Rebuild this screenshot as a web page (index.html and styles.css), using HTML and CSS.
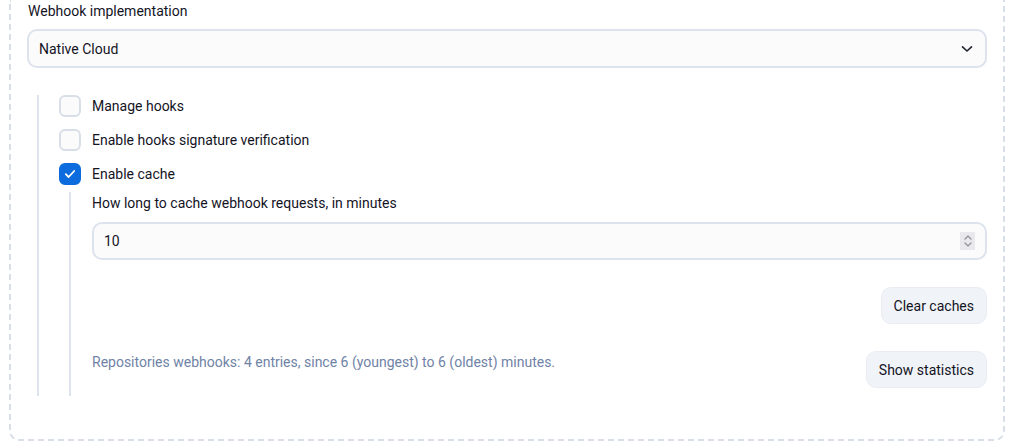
FILE: index.html
```html
<!DOCTYPE html>
<html>
<head>
<meta charset="utf-8">
<link rel="stylesheet" href="styles.css">
</head>
<body>
<div class="panel">
  <div class="field-label">Webhook implementation</div>
  <div class="select">
    <span class="select-value">Native Cloud</span>
    <svg class="chevron" width="12" height="8" viewBox="0 0 12 8"><path d="M1.5 1.8 L6 6 L10.5 1.8" fill="none" stroke="#1f2430" stroke-width="1.6" stroke-linecap="round" stroke-linejoin="round"/></svg>
  </div>
  <div class="nested">
    <div class="check-row">
      <span class="checkbox"></span>
      <span class="check-label">Manage hooks</span>
    </div>
    <div class="check-row">
      <span class="checkbox"></span>
      <span class="check-label">Enable hooks signature verification</span>
    </div>
    <div class="check-row">
      <span class="checkbox checked">
        <svg width="12" height="10" viewBox="0 0 12 10"><path d="M1.8 5.2 L4.6 8 L10.2 2" fill="none" stroke="#fff" stroke-width="1.8" stroke-linecap="round" stroke-linejoin="round"/></svg>
      </span>
      <span class="check-label">Enable cache</span>
    </div>
    <div class="nested inner">
      <div class="field-label">How long to cache webhook requests, in minutes</div>
      <div class="input">
        <span class="input-value">10</span>
        <span class="spinner">
          <svg width="10" height="16" viewBox="0 0 10 16"><path d="M2 6 L5 3 L8 6" fill="none" stroke="#8a8f98" stroke-width="1.2" stroke-linecap="round"/><path d="M2 10 L5 13 L8 10" fill="none" stroke="#8a8f98" stroke-width="1.2" stroke-linecap="round"/></svg>
        </span>
      </div>
      <div class="actions">
        <button class="btn">Clear caches</button>
      </div>
      <div class="stats-row">
        <span class="stats-text">Repositories webhooks: 4 entries, since 6 (youngest) to 6 (oldest) minutes.</span>
        <button class="btn">Show statistics</button>
      </div>
    </div>
  </div>
</div>
</body>
</html>
```

FILE: styles.css
```css
* { box-sizing: border-box; }
html, body { margin: 0; padding: 0; background: #fff; }
body {
  font-family: Roboto, "Noto Sans", sans-serif;
  font-size: 14px;
  color: #14141f;
}
.panel {
  margin-left: 9px;
  width: 996px;
  border: 2px dashed #d9dfe8;
  border-top: none;
  border-radius: 0 0 10px 10px;
  padding: 1px 16px 43px 16px;
}
.field-label {
  line-height: 20px;
  height: 20px;
  padding-left: 1px;
}
.select {
  margin-top: 8px;
  height: 39px;
  border: 2px solid #dce3ec;
  border-radius: 10px;
  background: #fbfbfc;
  display: flex;
  align-items: center;
  justify-content: space-between;
  padding: 0 12px 0 10px;
}
.chevron { display: block; }
.nested {
  margin-top: 27px;
  margin-left: 10px;
  border-left: 2px solid #dce3ec;
  padding-left: 20px;
  display: flex;
  flex-direction: column;
}
.check-row {
  display: flex;
  align-items: center;
  height: 22px;
  margin-bottom: 12px;
}
.checkbox {
  width: 22px;
  height: 22px;
  border: 2px solid #d8dfe9;
  border-radius: 6px;
  background: #fbfbfc;
  display: flex;
  align-items: center;
  justify-content: center;
  flex: none;
}
.checkbox.checked {
  background: #0c6cde;
  border-color: #0c6cde;
}
.checkbox svg { display: block; }
.check-label {
  margin-left: 11px;
  line-height: 20px;
}
.nested.inner {
  margin-top: -5px;
  margin-left: 10px;
  padding-left: 21px;
  padding-top: 1px;
  padding-bottom: 8px;
}
.inner .field-label { padding-left: 0; }
.input {
  margin-top: 9px;
  height: 38px;
  border: 2px solid #dce3ec;
  border-radius: 10px;
  background: #fbfbfc;
  display: flex;
  align-items: center;
  justify-content: space-between;
  padding: 0 12px 0 10px;
}
.spinner {
  width: 15px;
  height: 18px;
  background: #e9e9ed;
  display: flex;
  align-items: center;
  justify-content: center;
  margin-right: -2px;
}
.spinner svg { display: block; }
.actions {
  display: flex;
  justify-content: flex-end;
  margin-top: 27px;
}
.btn {
  font-family: inherit;
  font-size: 14px;
  color: #14141f;
  background: #f0f3f7;
  border: 1px solid #e9edf2;
  border-radius: 10px;
  height: 37px;
  padding: 0 12px;
  cursor: pointer;
}
.stats-row {
  display: flex;
  justify-content: space-between;
  align-items: center;
  margin-top: 27px;
}
.stats-text {
  color: #6f83a6;
  line-height: 20px;
  margin-top: -16px;
}
```
